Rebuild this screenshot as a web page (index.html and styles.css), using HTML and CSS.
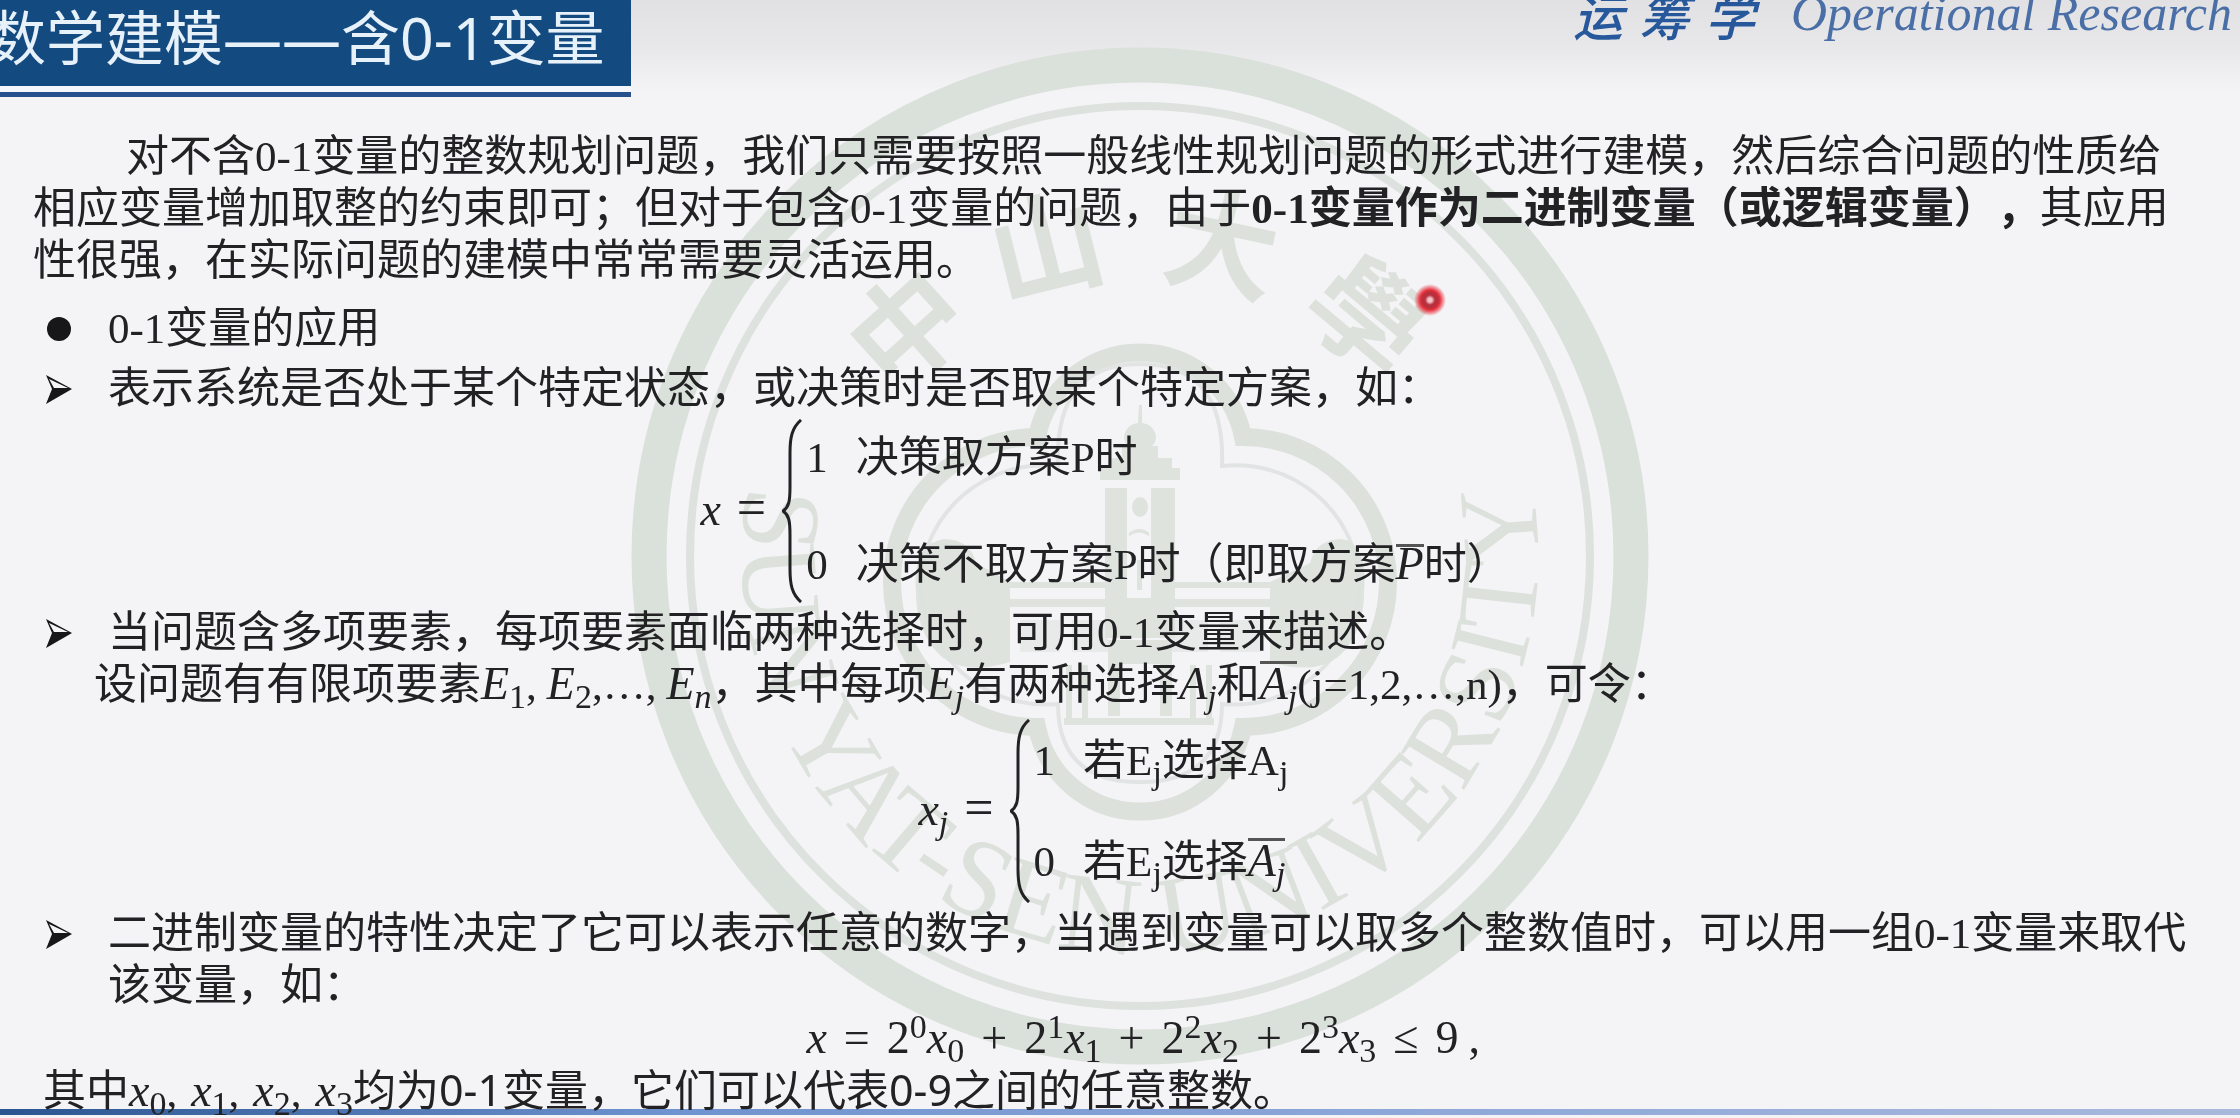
FILE: index.html
```html
<!DOCTYPE html>
<html lang="zh-CN">
<head>
<meta charset="utf-8">
<title>数学建模——含0-1变量</title>
<link rel="stylesheet" href="styles.css">
</head>
<body>
<div class="slide">
  <svg class="seal" viewBox="631 47 1018 1018" aria-hidden="true">
    <defs>
      <path id="arc-name" d="M1140 158 A398 398 0 1 0 1140 954 A398 398 0 1 0 1140 158"/>
    </defs>
    <circle class="ring-wide" cx="1140" cy="556" r="491"/>
    <circle class="ring-thin" cx="1140" cy="556" r="450"/>
    <text class="seal-en"><textPath href="#arc-name" startOffset="50%" text-anchor="middle">SUN YAT-SEN UNIVERSITY</textPath></text>
    <g class="seal-cn">
      <text transform="translate(907 328) rotate(-42)" y="42">中</text>
      <text transform="translate(1046 246) rotate(-14)" y="42">山</text>
      <text transform="translate(1222 244) rotate(12)" y="42">大</text>
      <text transform="translate(1368 316) rotate(40)" y="42">學</text>
    </g>
    <path class="foil-wide" d="M1037 437 A105 105 0 0 1 1243 437 A145 145 0 0 1 1243 727 A105 105 0 0 1 1037 727 A145 145 0 0 1 1037 437Z"/>
    <path class="foil-thin" d="M1058 466 Q1054 364 1140 364 Q1226 364 1222 466 A124 124 0 0 1 1360 585 A126 126 0 0 1 1222 704 Q1222 782 1140 782 Q1058 782 1058 704 A126 126 0 0 1 920 585 A124 124 0 0 1 1058 466Z"/>
    <g class="tower">
      <path d="M1139 405h3v18a16 14 0 0 1 10 23h6v12h14v10h8v12h-80v-12h8v-10h14v-12h6a16 14 0 0 1 10-23z"/>
      <path fill-rule="evenodd" d="M1105 488h70v150h-70zM1127 488h24v110h-24z"/>
      <ellipse cx="1140" cy="507" rx="8" ry="10"/>
      <path d="M1129 533q11-8 20 0v3q-10-7-20 0zM1137 560h5v30h-5z"/>
      <path d="M1010 582h95v6h-95zM1175 582h95v6h-95zM1010 599h260v8h-260z"/>
      <path d="M916 592q-4-48 28-53 26 0 32 24l34 19v80q-60 18-82-22-12-20-12-48zM1364 592q4-48-22-53-26 0-32 24l-40 19v80q60 18 82-22 12-20 12-48z"/>
      <path d="M1020 620h40v32h-40zM1072 620h36v32h-36zM1172 620h36v32h-36zM1220 620h40v32h-40z" opacity=".5"/>
      <path d="M1108 640h64v76h-12v-52h-40v52h-12zM1066 665h6v55h-6zM1082 665h6v55h-6zM1190 665h6v55h-6zM1206 665h6v55h-6zM1064 718h150v7h-150z"/>
    </g>
  </svg>
  <div class="rule"></div>

  <header class="top">
    <h1 class="title">数学建模——含0-1变量</h1>
    <p class="course"><span>运</span><span>筹</span><span>学</span><span class="course-en">Operational Research</span></p>
  </header>

  <main class="content">
    <p class="intro">对不含0-1变量的整数规划问题，我们只需要按照一般线性规划问题的形式进行建模，然后综合问题的性质给相应变量增加取整的约束即可；但对于包含0-1变量的问题，由于<b>0-1变量作为二进制变量（或逻辑变量），</b>其应用性很强，在实际问题的建模中常常需要灵活运用。</p>

    <ul class="points">
      <li><svg class="mark" viewBox="0 0 30 30" aria-hidden="true"><circle cx="16" cy="15" r="12"/></svg><p>0-1变量的应用</p></li>
      <li><svg class="mark" viewBox="0 0 30 30" aria-hidden="true"><path d="M3 1 29 15 3 30 9 15Z"/><path class="mark-lit" d="M6 5 25 14H11Z"/></svg><p>表示系统是否处于某个特定状态，或决策时是否取某个特定方案，如：</p></li>
    </ul>

    <div class="formula state">
      <span><i>x</i><span class="op">=</span></span>
      <svg class="brace" viewBox="0 0 20 184" aria-hidden="true"><path d="M19 1C10 9 8 18 8 34V68C8 82 7 88 1 92C7 96 8 102 8 116V150C8 166 10 175 19 183"/></svg>
      <div class="cases">
        <span>1</span><span>决策取方案P时</span>
        <span>0</span><span>决策不取方案P时（即取方案<i class="bar-short">P</i>时）</span>
      </div>
    </div>

    <ul class="points">
      <li><svg class="mark" viewBox="0 0 30 30" aria-hidden="true"><path d="M3 1 29 15 3 30 9 15Z"/><path class="mark-lit" d="M6 5 25 14H11Z"/></svg><p>当问题含多项要素，每项要素面临两种选择时，可用0-1变量来描述。</p></li>
    </ul>
    <p class="follow">设问题有有限项要素<i>E</i><sub>1</sub>,<span class="thin"></span><i>E</i><sub>2</sub>,…,<span class="thin"></span><i>E<sub>n</sub></i>，其中每项<i>E<sub>j</sub></i>有两种选择<i>A<sub>j</sub></i>和<i class="bar">A<sub>j</sub></i>(j=1,2,…,n)，可令：</p>

    <div class="formula choice">
      <span><i>x<sub>j</sub></i><span class="op">=</span></span>
      <svg class="brace" viewBox="0 0 20 184" aria-hidden="true"><path d="M19 1C10 9 8 18 8 34V68C8 82 7 88 1 92C7 96 8 102 8 116V150C8 166 10 175 19 183"/></svg>
      <div class="cases">
        <span>1</span><span>若E<sub>j</sub>选择A<sub>j</sub></span>
        <span>0</span><span>若E<sub>j</sub>选择<i class="bar">A<sub>j</sub></i></span>
      </div>
    </div>

    <ul class="points">
      <li><svg class="mark" viewBox="0 0 30 30" aria-hidden="true"><path d="M3 1 29 15 3 30 9 15Z"/><path class="mark-lit" d="M6 5 25 14H11Z"/></svg><p>二进制变量的特性决定了它可以表示任意的数字，当遇到变量可以取多个整数值时，可以用一组0-1变量来取代该变量，如：</p></li>
    </ul>
    <p class="sum"><i>x</i><span class="op">=</span>2<sup>0</sup><i>x</i><sub>0</sub><span class="op">+</span>2<sup>1</sup><i>x</i><sub>1</sub><span class="op">+</span>2<sup>2</sup><i>x</i><sub>2</sub><span class="op">+</span>2<sup>3</sup><i>x</i><sub>3</sub><span class="op">≤</span>9<span class="thin"></span>,</p>
    <p class="last">其中<i>x</i><sub>0</sub>,<span class="thin"></span><i>x</i><sub>1</sub>,<span class="thin"></span><i>x</i><sub>2</sub>,<span class="thin"></span><i>x</i><sub>3</sub>均为<span class="sans">0-1</span>变量，它们可以代表<span class="sans">0-9</span>之间的任意整数。</p>
  </main>

  <div class="laser"></div>
</div>
</body>
</html>
```
FILE: styles.css
```css
* { box-sizing: border-box; }

body {
  margin: 0;
  background: #f4f3f6;
}

.slide {
  position: relative;
  min-height: 100vh;
  overflow: hidden;
  background: linear-gradient(#e1e0e2 0, #e8e7e9 48px, #f4f3f6 92px);
  color: #222124;
  font: 43px/52px "Liberation Serif", "Noto Sans CJK SC", serif;
  text-spacing-trim: space-all;
  text-autospace: no-autospace;
}

p, h1, ul { margin: 0; padding: 0; }

/* University seal behind the text */
.seal {
  position: absolute;
  top: 47px;
  left: calc(50% - 489px);
  width: 1018px;
  height: 1018px;
  fill: #dce1dc;
}
.ring-wide { fill: none; stroke: #dae0da; stroke-width: 35px; }
.ring-thin { fill: none; stroke: #dde2de; stroke-width: 8px; }
.foil-wide { fill: none; stroke: #dce1dc; stroke-width: 18px; }
.foil-thin { fill: none; stroke: #e2e4e4; stroke-width: 4px; }
.tower { opacity: .9; }
.seal-en { font: 112px "Liberation Serif", serif; }
.seal-cn { font: bold 112px "Noto Sans CJK TC", sans-serif; text-anchor: middle; }

/* Header */
.top {
  position: relative;
  display: flex;
  justify-content: space-between;
  align-items: flex-start;
  height: 97px;
}
.title {
  width: 631px;
  height: 97px;
  text-indent: -13px;
  white-space: nowrap;
  background: linear-gradient(#134a7f 0 86px, #f4f7fb 86px 92px, #27518c 92px);
  color: #e6f1fa;
  font: 400 59px/74px "Noto Sans", "Noto Sans CJK SC", sans-serif;
}
.course {
  display: flex;
  gap: 16px;
  margin-top: -14px;
  padding-right: 8px;
  color: #27589c;
  font: italic 500 50px/56px "Noto Sans CJK SC", sans-serif;
}
.course-en {
  padding-left: 20px;
  color: #4a6ea6;
  font: italic 50px/54px "Liberation Serif", serif;
}

/* Body text */
.content { position: relative; padding-top: 34px; }
.intro {
  padding: 0 50px 0 33px;
  margin-bottom: 16px;
  text-indent: 93px;
}
.points { list-style: none; }
.points li {
  display: flex;
  padding: 0 30px 0 43px;
}
.points li + li { margin-top: 8px; }
.points p { flex: 1; }
.mark {
  flex: none;
  width: 30px;
  height: 30px;
  margin: 11px 35px 0 0;
  fill: #17171a;
}
.mark-lit { fill: #f4f3f6; }
.follow { padding-left: 94px; }

i { font-size: 46px; line-height: 0; }
sub, sup { font-size: 34px; line-height: 0; }
sub { vertical-align: -9px; }
sup { vertical-align: 15px; }
.thin { padding-left: 10px; }
.op { padding: 0 16px; }
.sans { font-family: "Noto Sans", sans-serif; }
.bar {
  display: inline-block;
  line-height: 40px;
  border-top: 3px solid #555;
}
.bar-short {
  display: inline-block;
  line-height: 34px;
  border-top: 3px solid #555;
}

/* Formulas */
.formula {
  display: flex;
  align-items: center;
}
.brace {
  width: 20px;
  height: 184px;
  margin-right: 4px;
  fill: none;
  stroke: #222124;
  stroke-width: 3px;
}
.formula .op { font-size: 52px; line-height: 0; }
.cases {
  display: grid;
  grid-template-columns: auto auto;
  column-gap: 28px;
}
.state { padding: 4px 0 4px 31%; }
.state > :first-child { padding-left: 6px; }
.state .cases { row-gap: 55px; }
.choice { padding: 8px 0 5px 41%; }
.choice .cases { row-gap: 49px; }
.sum {
  padding-left: 36%;
  font-size: 46px;
}
.last { padding-left: 43px; }
.sum .op { padding: 0 17px; }
.last .thin { padding-left: 14px; }

.rule {
  position: absolute;
  right: 0;
  bottom: 3px;
  left: 0;
  height: 6px;
  background: linear-gradient(90deg, #2a5590, #6f93cf 30%, #8ba6d8 60%, #a9b9dd);
}

/* Laser pointer spot */
.laser {
  position: absolute;
  top: 284px;
  left: 1414px;
  width: 32px;
  height: 32px;
  border-radius: 50%;
  background: radial-gradient(circle, #f3c3c8 0 2px, #b7303c 5px 8px, #e8303c 10px, #f4f3f600 16px);
}
```
